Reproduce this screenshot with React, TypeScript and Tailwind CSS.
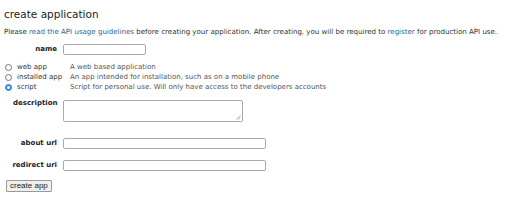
import React from "react";

export default function App() {
  const labelCls = "font-bold text-right text-[#222] pr-[6px]";
  return (
    <div className="w-[512px] h-[220px] bg-white text-[#333] overflow-hidden" style={{ fontFamily: '"DejaVu Sans", Verdana, sans-serif' }}>
      <div className="pl-[4px] pt-[7px]">
        <h1 className="text-[10.5px] leading-[14px] text-[#222]">create application</h1>
        <p className="mt-[6px] text-[7.05px] leading-[9px] text-[#333] whitespace-nowrap">
          Please <span className="text-[#369]">read the API usage guidelines</span> before creating your application. After creating, you will be required to <span className="text-[#369]">register</span> for production API use.
        </p>
      </div>

      <div className="pl-[3px] text-[7px] leading-[9px]">
        <div className="flex items-center mt-[8px]">
          <div className={`w-[60px] ${labelCls}`}>name</div>
          <div className="w-[83px] h-[11px] border border-[#aaa] rounded-[2px] bg-white" />
        </div>

        <div className="mt-[7px] flex flex-col">
          {[
            ["web app", "A web based application", false],
            ["installed app", "An app intended for installation, such as on a mobile phone", false],
            ["script", "Script for personal use. Will only have access to the developers accounts", true],
          ].map(([label, desc, checked]) => (
            <div key={label as string} className="flex items-center h-[10px]">
              <div className="w-[67px] flex items-center pl-[2px]">
                <span
                  className={`w-[7px] h-[7px] rounded-full border ${checked ? "border-[#3b82f6] bg-[#3b82f6]" : "border-[#777] bg-white"} flex items-center justify-center`}
                >
                  {checked ? <span className="w-[3px] h-[3px] rounded-full bg-white" /> : null}
                </span>
                <span className="ml-[5px] text-[#333]">{label as string}</span>
              </div>
              <div className="text-[#555]">{desc as string}</div>
            </div>
          ))}
        </div>

        <div className="flex items-start mt-[8px]">
          <div className="w-[60px] font-bold text-[#222] pl-[10px] -mt-[1px]">description</div>
          <div className="relative w-[180px] h-[22px] border border-[#aaa] rounded-[2px] bg-white">
            <svg className="absolute right-[1px] bottom-[1px]" width="5" height="5" viewBox="0 0 5 5">
              <path d="M4.5 0.5 L0.5 4.5 M4.5 2.5 L2.5 4.5" stroke="#999" strokeWidth="0.8" />
            </svg>
          </div>
        </div>

        <div className="flex items-center mt-[16px]">
          <div className={`w-[60px] ${labelCls}`}>about url</div>
          <div className="w-[203px] h-[11px] border border-[#aaa] rounded-[2px] bg-white" />
        </div>

        <div className="flex items-center mt-[11px]">
          <div className={`w-[60px] ${labelCls}`}>redirect uri</div>
          <div className="w-[203px] h-[11px] border border-[#aaa] rounded-[2px] bg-white" />
        </div>

        <div className="mt-[9px] pl-[3px]">
          <button
            className="h-[12px] px-[3px] border border-[#999] rounded-[1px] bg-[#efefef] text-[8px] leading-[10px] text-[#222]"
            style={{ fontFamily: '"Liberation Sans", Arial, sans-serif' }}
          >
            create app
          </button>
        </div>
      </div>
    </div>
  );
}
